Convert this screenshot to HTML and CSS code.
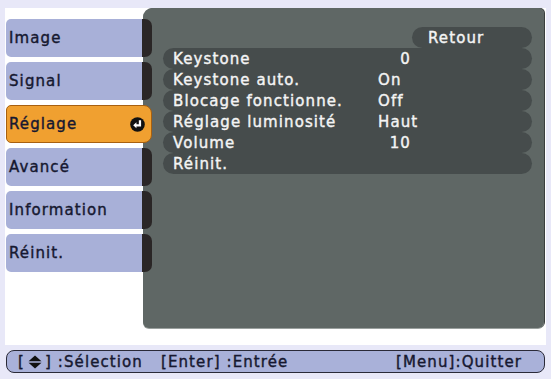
FILE: index.html
```html
<!DOCTYPE html>
<html>
<head>
<meta charset="utf-8">
<link rel="stylesheet" href="styles.css">
</head>
<body>
<div class="screen">
  <div class="sheet">
    <div class="tabs">
      <div class="tab"><span class="tab-label">Image</span></div>
      <div class="tab"><span class="tab-label">Signal</span></div>
      <div class="tab tab-active"><span class="tab-label">Réglage</span>
        <svg class="enter" width="15" height="15" viewBox="0 0 14 14"><circle cx="7" cy="7" r="6.8" fill="#111"/><path d="M9.3 3 V7.8 H5" fill="none" stroke="#fff" stroke-width="2.1"/><path d="M3 7.8 L6 5 L6 10.6 Z" fill="#fff"/></svg>
      </div>
      <div class="tab"><span class="tab-label">Avancé</span></div>
      <div class="tab"><span class="tab-label">Information</span></div>
      <div class="tab"><span class="tab-label">Réinit.</span></div>
    </div>
    <div class="panel">
      <div class="row row-back"><span class="back-label">Retour</span></div>
      <div class="row"><span class="name">Keystone</span><span class="num">0</span></div>
      <div class="row"><span class="name">Keystone auto.</span><span class="val">On</span></div>
      <div class="row"><span class="name">Blocage fonctionne.</span><span class="val">Off</span></div>
      <div class="row"><span class="name">Réglage luminosité</span><span class="val">Haut</span></div>
      <div class="row"><span class="name">Volume</span><span class="num">10</span></div>
      <div class="row"><span class="name">Réinit.</span></div>
    </div>
  </div>
  <div class="footer">
    <span class="hint hint-sel">[<svg class="updown" width="14" height="14" viewBox="0 0 14 14"><path d="M7 0.5 L13.5 6.3 H0.5 Z" fill="#111"/><path d="M7 13.5 L13.5 7.7 H0.5 Z" fill="#111"/></svg>] :Sélection</span>
    <span class="hint hint-enter">[Enter] :Entrée</span>
    <span class="hint hint-menu">[Menu]:Quitter</span>
  </div>
</div>
</body>
</html>
```
FILE: styles.css
```css
html, body {
  margin: 0;
  padding: 0;
  background: #e8e8f8;
}
.screen {
  width: 551px;
  height: 379px;
  overflow: hidden;
  padding-top: 8px;
  box-sizing: border-box;
  font-family: "DejaVu Sans", sans-serif;
  font-size: 15px;
  letter-spacing: 1.1px;
  -webkit-text-stroke: 0.4px currentColor;
}
.sheet {
  margin-left: 5px;
  width: 541px;
  height: 337px;
  background: #ffffff;
  display: flex;
  align-items: flex-start;
}
.tabs {
  margin-left: 1px;
  margin-top: 11px;
  width: 146px;
  margin-right: -9px;
  position: relative;
  z-index: 2;
  display: flex;
  flex-direction: column;
  gap: 5px;
}
.tab {
  height: 38px;
  box-sizing: border-box;
  background: #a8b0d8;
  border-radius: 5px 7px 7px 5px;
  border-right: 10px solid #2a2626;
  display: flex;
  align-items: center;
  padding-left: 3px;
  color: #161830;
}
.tab-active {
  background: #f0a030;
  border: 1px solid #a86010;
  border-radius: 5px 8px 8px 5px;
  padding-left: 2px;
  padding-right: 6px;
  justify-content: space-between;
}
.enter {
  display: block;
}
.panel {
  width: 401px;
  height: 320px;
  box-sizing: border-box;
  background: #5f6765;
  border-radius: 9px 5px 6px 6px;
  box-shadow: 0 1px 0 #9aa09e, 1px 0 0 #3a3e3e;
  padding: 19px 12px 0 20px;
  display: flex;
  flex-direction: column;
  color: #f4f4f4;
}
.row {
  height: 21px;
  background: #464c4c;
  border-radius: 10.5px;
  display: flex;
  align-items: center;
  padding-left: 10px;
}
.row-back {
  margin-left: auto;
  width: 120px;
  box-sizing: border-box;
  padding-left: 16px;
}
.name {
  width: 205px;
}
.val {
  width: 40px;
}
.num {
  width: 33px;
  text-align: right;
}
.footer {
  margin: 5px 0 0 6px;
  width: 539px;
  height: 23px;
  box-sizing: border-box;
  background: #a9b1d9;
  border: 1px solid #2a2a38;
  border-radius: 8px;
  display: flex;
  align-items: center;
  color: #161830;
}
.hint {
  display: flex;
  align-items: center;
  white-space: nowrap;
}
.hint-sel {
  margin-left: 11px;
}
.updown {
  margin: 0 3px;
}
.hint-enter {
  margin-left: 18px;
}
.hint-menu {
  margin-left: auto;
  margin-right: 22px;
}
```
